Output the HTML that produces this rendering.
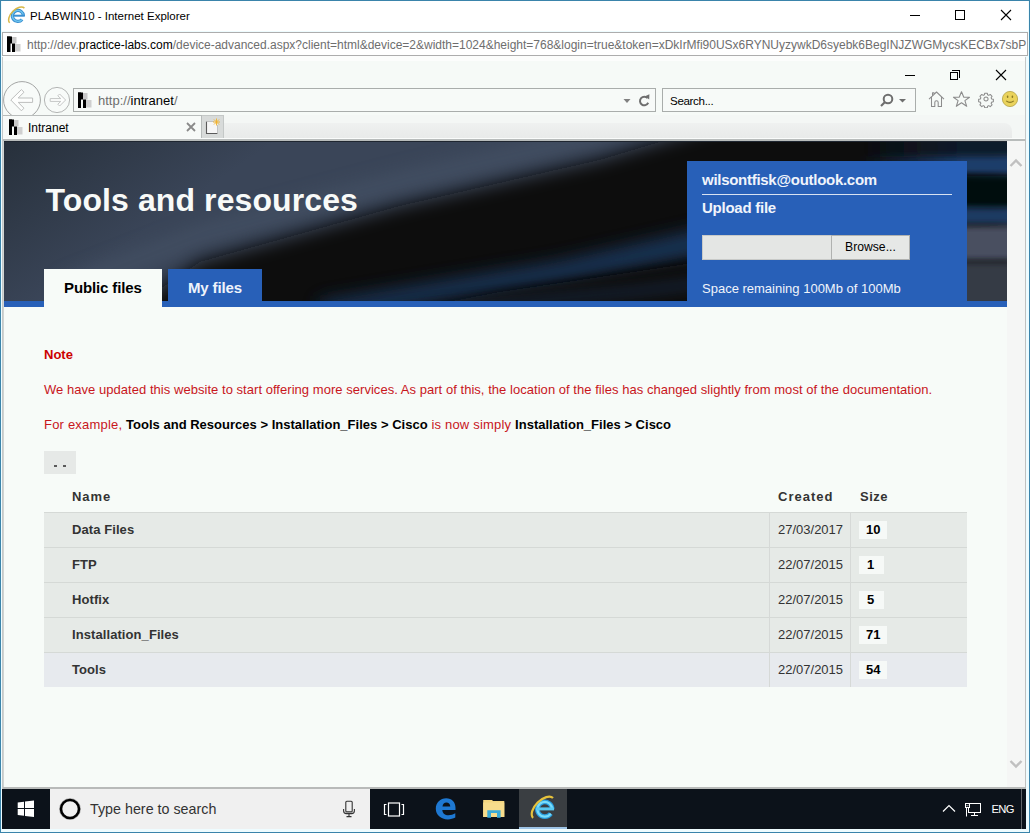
<!DOCTYPE html>
<html><head><meta charset="utf-8">
<style>
*{margin:0;padding:0;box-sizing:border-box}
html,body{width:1030px;height:833px;overflow:hidden;background:#fff;font-family:"Liberation Sans",sans-serif}
.a{position:absolute}
.t{position:absolute;white-space:pre;line-height:1}
</style></head>
<body>
<!-- outer window border -->
<div class="a" style="left:0;top:0;width:1030px;height:833px;border:1px solid #3a84ab;background:#fff"></div>
<div class="a" style="left:1px;top:1px;width:1028px;height:831px;background:#eefcff"></div>
<div class="a" style="left:2px;top:1px;width:1026px;height:30px;background:#fff"></div>

<!-- title bar -->
<svg class="a" style="left:6px;top:4px" width="22" height="22" viewBox="0 0 22 22">
  <path d="M17.4 11.9A5.5 5.5 0 1 0 16.1 15.5" stroke="#3a8fd0" stroke-width="3.3" fill="none"/>
  <path d="M17.4 11.9A5.5 5.5 0 1 0 16.1 15.5" stroke="#70c6f0" stroke-width="1.3" fill="none"/>
  <rect x="7" y="10.7" width="11.8" height="2" fill="#3a8fd0"/>
  <path d="M18.4 4.1A10 5.6 -45 0 0 3.7 18.8" stroke="#d8b848" stroke-width="1.5" fill="none"/>
</svg>
<div class="t" style="left:30px;top:10.5px;font-size:11.5px;color:#000">PLABWIN10 - Internet Explorer</div>
<div class="a" style="left:910px;top:15px;width:10px;height:1px;background:#000"></div>
<div class="a" style="left:955px;top:10px;width:10px;height:10px;border:1px solid #000"></div>
<svg class="a" style="left:1000px;top:9px" width="12" height="12" viewBox="0 0 12 12"><path d="M1 1L11 11M11 1L1 11" stroke="#000" stroke-width="1.1"/></svg>

<!-- rdp url box -->
<div class="a" style="left:2px;top:32px;width:1026px;height:24px;border:1px solid #adadad;background:#fff"></div>
<svg class="a" style="left:7px;top:36px" width="14" height="16" viewBox="0 0 14 16">
  <rect x="0" y="0.5" width="3.5" height="15.5" fill="#000"/><rect x="0" y="0.5" width="5" height="7" fill="#000"/>
  <rect x="5" y="1" width="4.5" height="6.5" fill="#c8c8c8"/>
  <rect x="5" y="7.5" width="3" height="8.5" fill="#000"/>
  <rect x="8" y="8" width="5.5" height="7.5" fill="#cfcfcf"/>
</svg>
<div class="t" style="left:27px;top:39px;font-size:12px;color:#6e6e6e;letter-spacing:-0.005px">http://dev.<span style="color:#000">practice-labs.com</span>/device-advanced.aspx?client=html&amp;device=2&amp;width=1024&amp;height=768&amp;login=true&amp;token=xDkIrMfi90USx6RYNUyzywkD6syebk6BegINJZWGMycsKECBx7sbP</div>

<!-- IE window -->
<div class="a" id="ie" style="left:2px;top:57px;width:1024px;height:772px;background:#f6faf7;border-left:1px solid #c4c8c8;border-right:1px solid #c4c8c8"></div>


<div class="a" style="left:3px;top:56px;width:1022px;height:5px;background:#fcfdfc"></div>
<!-- IE caption buttons -->
<div class="a" style="left:905px;top:75px;width:10px;height:1px;background:#000"></div>
<div class="a" style="left:950px;top:72px;width:8px;height:8px;border:1px solid #000"></div>
<div class="a" style="left:952px;top:70px;width:8px;height:8px;border-top:1px solid #000;border-right:1px solid #000"></div>
<svg class="a" style="left:995px;top:69px" width="12" height="12" viewBox="0 0 12 12"><path d="M1 1L11 11M11 1L1 11" stroke="#000" stroke-width="1.1"/></svg>

<!-- back / forward -->
<svg class="a" style="left:0px;top:78px" width="75" height="37" viewBox="0 78 75 37">
  <circle cx="22" cy="100" r="18.4" fill="#f8fbf9" stroke="#a4a6a5" stroke-width="1"/>
  <path d="M10.8 100L21.4 89.6L24 92.2L18.2 98H32.6V102.4H18.2L24 108.2L21.4 110.8z" fill="#fdfefd" stroke="#bdbfbe" stroke-width="1" stroke-linejoin="round"/>
  <circle cx="57" cy="100" r="12.6" fill="#f8fbf9" stroke="#b4b6b5" stroke-width="1"/>
  <path d="M65.6 100L59.6 94L57.8 95.8L60.8 98.6H50.2V101.4H60.8L57.8 104.2L59.6 106z" fill="#fdfefd" stroke="#c4c6c5" stroke-width="1" stroke-linejoin="round"/>
</svg>

<!-- address box -->
<div class="a" style="left:73px;top:88px;width:583px;height:24px;border:1px solid #a9adab;background:#f7faf8"></div>
<svg class="a" style="left:78px;top:92px" width="14" height="16" viewBox="0 0 14 16">
  <rect x="0" y="0.5" width="3" height="15.5" fill="#000"/><rect x="0" y="0.5" width="5" height="7" fill="#000"/>
  <rect x="5" y="1" width="4.5" height="6.5" fill="#c8c8c8"/>
  <rect x="5" y="7.5" width="3" height="8.5" fill="#000"/>
  <rect x="8" y="8" width="5.5" height="7.5" fill="#cfcfcf"/>
</svg>
<div class="t" style="left:98px;top:94px;font-size:13px;color:#6e6e6e">http://<span style="color:#000">intranet</span>/</div>
<svg class="a" style="left:622px;top:97px" width="10" height="8" viewBox="0 0 10 8"><path d="M1.5 2H8.5L5 6z" fill="#808080"/></svg>
<svg class="a" style="left:638px;top:93px" width="13" height="14" viewBox="0 0 13 14">
  <path d="M9.6 5.2A4.3 4.3 0 1 0 10.2 9.8" stroke="#6e6e6e" stroke-width="2" fill="none"/>
  <path d="M7 3.2L11.4 1.2L11.2 6.4z" fill="#6e6e6e"/>
</svg>

<!-- search box -->
<div class="a" style="left:662px;top:88px;width:254px;height:24px;border:1px solid #a9adab;background:#f7faf8"></div>
<div class="t" style="left:670px;top:94.8px;font-size:11.6px;color:#000;letter-spacing:-0.35px">Search...</div>
<svg class="a" style="left:878px;top:92px" width="30" height="16" viewBox="0 0 30 16">
  <circle cx="10" cy="7" r="4.3" stroke="#6e6e6e" stroke-width="2" fill="none"/>
  <path d="M7 10L3 14" stroke="#6e6e6e" stroke-width="2.2"/>
  <path d="M21 7H28L24.5 10.5z" fill="#6e6e6e"/>
</svg>

<!-- toolbar icons -->
<svg class="a" style="left:928px;top:90px" width="92" height="18" viewBox="0 0 92 18">
  <path d="M1 9.2L8.5 2L16 9.2M3.5 7V16.5H6.8V12.5A1.7 1.7 0 0 1 10.2 12.5V16.5H13.5V7M4.5 6V2.8H6V4.5" stroke="#8c8c8c" stroke-width="1.05" fill="none" stroke-linejoin="round"/>
  <path d="M33.5 1.8L35.8 7.2H41.5L36.9 10.6L38.7 16.3L33.5 12.8L28.3 16.3L30.1 10.6L25.5 7.2H31.2z" stroke="#8c8c8c" stroke-width="1.1" fill="none" stroke-linejoin="round"/>
  <g transform="translate(58,9) scale(0.8)" stroke="#8c8c8c" stroke-width="1.3" fill="none">
    <path d="M-1.6 -7.3h3.2l.4 2.1 1.5.7 1.8-1.2 2.3 2.3-1.2 1.8.7 1.5 2.1.4v3.2l-2.1.4-.7 1.5 1.2 1.8-2.3 2.3-1.8-1.2-1.5.7-.4 2.1h-3.2l-.4-2.1-1.5-.7-1.8 1.2-2.3-2.3 1.2-1.8-.7-1.5-2.1-.4v-3.2l2.1-.4.7-1.5-1.2-1.8 2.3-2.3 1.8 1.2 1.5-.7z" stroke-linejoin="round"/>
    <circle cx="0" cy="0" r="2.6"/>
  </g>
  <circle cx="82" cy="9" r="7.6" fill="#ead35c" stroke="#b4a244" stroke-width="0.8"/>
  <ellipse cx="79.6" cy="6.8" rx="0.8" ry="1.3" fill="#8a7a24"/><ellipse cx="84.4" cy="6.8" rx="0.8" ry="1.3" fill="#8a7a24"/>
  <path d="M78.2 10.8Q82 14 85.8 10.8" stroke="#8a7a24" stroke-width="1.1" fill="none"/>
</svg>

<!-- tab row -->
<div class="a" style="left:3px;top:115px;width:1022px;height:24px;background:#f4f7f5"></div>
<div class="a" style="left:215px;top:123px;width:797px;height:16px;border-radius:8px 8px 0 0;background:linear-gradient(#eff1f0,#e8eae9)"></div>
<div class="a" style="left:3px;top:115px;width:199px;height:24px;border-top:1px solid #b8bcbb;border-right:1px solid #b8bcbb;background:#f7faf8"></div>
<svg class="a" style="left:9px;top:119px" width="14" height="16" viewBox="0 0 14 16">
  <rect x="0" y="0.5" width="3" height="15.5" fill="#000"/><rect x="0" y="0.5" width="5" height="7" fill="#000"/>
  <rect x="5" y="1" width="4.5" height="6.5" fill="#c8c8c8"/>
  <rect x="5" y="7.5" width="3" height="8.5" fill="#000"/>
  <rect x="8" y="8" width="5.5" height="7.5" fill="#cfcfcf"/>
</svg>
<div class="t" style="left:28px;top:122px;font-size:12px;color:#000">Intranet</div>
<svg class="a" style="left:186px;top:122px" width="10" height="10" viewBox="0 0 10 10"><path d="M1 1L9 9M9 1L1 9" stroke="#8a8a8a" stroke-width="1.8"/></svg>
<div class="a" style="left:202px;top:115px;width:22px;height:23px;background:#d8dbda;border-right:1px solid #c4c8c7;border-top:1px solid #c4c8c7"></div>
<svg class="a" style="left:202px;top:116px" width="22" height="22" viewBox="0 0 22 22">
  <rect x="4" y="5.5" width="11.5" height="12.5" fill="#f6f6f6"/>
  <path d="M4.5 5.5V17.5H15.5" stroke="#5a5a5a" stroke-width="1.1" fill="none"/>
  <path d="M4.5 5.5H12M15.5 9V17.5" stroke="#b8b8b8" stroke-width="0.8" fill="none"/>
  <g stroke="#f0b028" stroke-width="0.9"><path d="M14.5 2.5V9.5M11 6H18M12 3.5L17 8.5M17 3.5L12 8.5"/></g>
</svg>
<div class="a" style="left:3px;top:138px;width:1022px;height:1px;background:#fafcfb"></div>
<div class="a" style="left:3px;top:139px;width:1022px;height:2px;background:#b8bcbb"></div>


<!-- content area -->
<div class="a" style="left:3px;top:141px;width:1023px;height:647px;background:#f7fbf8"></div>
<div class="a" style="left:3px;top:141px;width:1px;height:647px;background:#d0d4d3"></div>
<!-- header image -->
<svg class="a" id="hdr" style="left:4px;top:141px" width="1003" height="166" viewBox="4 141 1003 166">
  <defs>
    <filter id="b1" x="-20%" y="-50%" width="140%" height="200%"><feGaussianBlur stdDeviation="9"/></filter>
    <filter id="b2" x="-20%" y="-50%" width="140%" height="200%"><feGaussianBlur stdDeviation="6"/></filter>
    <filter id="b4" x="-20%" y="-50%" width="140%" height="200%"><feGaussianBlur stdDeviation="3"/></filter>
    <filter id="b3" x="-50%" y="-50%" width="200%" height="200%"><feGaussianBlur stdDeviation="30"/></filter>
    <linearGradient id="tl" x1="0" y1="0" x2="1" y2="0.6">
      <stop offset="0" stop-color="#27303b"/><stop offset="0.5" stop-color="#27303b" stop-opacity="0"/>
    </linearGradient>
  </defs>
  <rect x="4" y="141" width="1003" height="166" fill="#3a4558"/>
  <rect x="4" y="141" width="400" height="166" fill="url(#tl)"/>
  
  <path d="M60 300L200 245L400 192L600 146L700 120L700 100L600 126L400 172L200 225L60 280z" fill="#4a566a" filter="url(#b1)" opacity="0.55"/>
  <!-- dark band -->
  <path d="M100 330L200 262L400 206L600 160L680 136L760 110L1010 90L1010 330z" fill="#111111" filter="url(#b1)"/>
  <!-- blue streaks -->
  <path d="M320 302L560 262L700 230L1010 176L1010 200L700 254L560 282L320 320z" fill="#1b3a62" filter="url(#b1)" opacity="0.9"/>
  <path d="M300 330L500 292L700 262L1010 224L1010 330z" fill="#0e0e10" filter="url(#b2)"/>
  <path d="M300 314L640 284L1010 240L1010 252L640 298L300 330z" fill="#1e2e48" filter="url(#b2)" opacity="0.45"/>
  <!-- right strip -->
  <linearGradient id="rs1" x1="0" y1="0" x2="1" y2="0"><stop offset="0" stop-color="#1a3c6a" stop-opacity="0"/><stop offset="0.6" stop-color="#1a3c6a"/></linearGradient>
  <linearGradient id="rs0" x1="0" y1="0" x2="1" y2="0"><stop offset="0" stop-color="#0f1a2a" stop-opacity="0"/><stop offset="0.6" stop-color="#0f1a2a"/></linearGradient>
  <rect x="860" y="130" width="170" height="27" fill="url(#rs0)" filter="url(#b4)"/>
  <rect x="860" y="156" width="170" height="18" fill="url(#rs1)" filter="url(#b4)"/>
  <rect x="900" y="176" width="130" height="32" fill="#060709" filter="url(#b4)"/>
  <rect x="900" y="208" width="130" height="16" fill="#1e3a62" filter="url(#b4)"/>
  <rect x="900" y="226" width="130" height="34" fill="#4a5060" filter="url(#b4)"/>
  <rect x="900" y="262" width="130" height="50" fill="#363b45" filter="url(#b4)"/>
  <rect x="4" y="141" width="1003" height="1" fill="#1f2630"/>
</svg>
<div class="a" style="left:4px;top:301px;width:1003px;height:6px;background:#2860b8"></div>

<!-- heading -->
<div class="t" style="left:45.5px;top:183.5px;font-size:32px;font-weight:bold;color:#f8faf8;letter-spacing:0.1px">Tools and resources</div>

<!-- tabs -->
<div class="a" style="left:44px;top:269px;width:118px;height:38px;background:#f7fbf8"></div>
<div class="t" style="left:64px;top:279.5px;font-size:15px;font-weight:bold;color:#000;letter-spacing:-0.12px">Public files</div>
<div class="a" style="left:168px;top:269px;width:94px;height:32px;background:#2860b8"></div>
<div class="t" style="left:188px;top:279.5px;font-size:15px;font-weight:bold;color:#eef3fb;letter-spacing:-0.15px">My files</div>

<!-- upload panel -->
<div class="a" style="left:687px;top:161px;width:280px;height:146px;background:#2860b8"></div>
<div class="t" style="left:702px;top:172.2px;font-size:15px;font-weight:bold;color:#f0f4fb;letter-spacing:-0.28px">wilsontfisk@outlook.com</div>
<div class="a" style="left:702px;top:194px;width:250px;height:1px;background:#d8e2f2"></div>
<div class="t" style="left:702px;top:200.3px;font-size:15px;font-weight:bold;color:#f0f4fb;letter-spacing:-0.25px">Upload file</div>
<div class="a" style="left:702px;top:235px;width:130px;height:25px;background:#e4e6e4;border:1px solid #c8cac8"></div>
<div class="a" style="left:831px;top:235px;width:79px;height:25px;background:#e6e8e6;border:1px solid #b0b2b0"></div>
<div class="t" style="left:845px;top:241px;font-size:12.2px;color:#000">Browse...</div>
<div class="t" style="left:702px;top:282px;font-size:13px;color:#f0f4fb">Space remaining 100Mb of 100Mb</div>

<!-- note -->
<div class="t" style="left:44px;top:348px;font-size:13px;font-weight:bold;color:#cc0000">Note</div>
<div class="t" style="left:44px;top:383px;font-size:13px;color:#c8161c;letter-spacing:0.04px">We have updated this website to start offering more services. As part of this, the location of the files has changed slightly from most of the documentation.</div>
<div class="t" style="left:44px;top:418px;font-size:13px;color:#c8161c;letter-spacing:0.2px">For example, <b style="color:#000;letter-spacing:0.01px">Tools and Resources &gt; Installation_Files &gt; Cisco</b> is now simply <b style="color:#000;letter-spacing:0.01px">Installation_Files &gt; Cisco</b></div>

<!-- up button -->
<div class="a" style="left:44px;top:451px;width:32px;height:23px;background:#e6e9e7"></div>
<div class="a" style="left:54px;top:465px;width:3px;height:2px;background:#5a5a5a"></div>
<div class="a" style="left:63px;top:465px;width:3px;height:2px;background:#5a5a5a"></div>

<!-- table -->
<div class="t" style="left:72px;top:490px;font-size:13px;font-weight:bold;color:#333;letter-spacing:0.9px">Name</div>
<div class="t" style="left:778px;top:490px;font-size:13px;font-weight:bold;color:#333;letter-spacing:1px">Created</div>
<div class="t" style="left:860px;top:490px;font-size:13px;font-weight:bold;color:#333;letter-spacing:0.5px">Size</div>
<div class="a" style="left:44px;top:512px;width:923px;height:35px;background:#e6eae7;border-top:1px solid #d5d9d6"></div>
<div class="a" style="left:769px;top:512px;width:1px;height:35px;background:#d6d9d7"></div>
<div class="a" style="left:850px;top:512px;width:1px;height:35px;background:#d6d9d7"></div>
<div class="t" style="left:72px;top:523px;font-size:13px;font-weight:bold;color:#333;letter-spacing:0.08px">Data Files</div>
<div class="t" style="left:778px;top:523px;font-size:13px;color:#333">27/03/2017</div>
<div class="a" style="left:859px;top:521px;width:28px;height:18px;background:#f6f9f7"></div>
<div class="t" style="left:866px;top:523px;font-size:13px;font-weight:bold;color:#000">10</div>
<div class="a" style="left:44px;top:547px;width:923px;height:35px;background:#e6eae7;border-top:1px solid #d5d9d6"></div>
<div class="a" style="left:769px;top:547px;width:1px;height:35px;background:#d6d9d7"></div>
<div class="a" style="left:850px;top:547px;width:1px;height:35px;background:#d6d9d7"></div>
<div class="t" style="left:72px;top:558px;font-size:13px;font-weight:bold;color:#333;letter-spacing:0.08px">FTP</div>
<div class="t" style="left:778px;top:558px;font-size:13px;color:#333">22/07/2015</div>
<div class="a" style="left:859px;top:556px;width:25px;height:18px;background:#f6f9f7"></div>
<div class="t" style="left:867px;top:558px;font-size:13px;font-weight:bold;color:#000">1</div>
<div class="a" style="left:44px;top:582px;width:923px;height:35px;background:#e6eae7;border-top:1px solid #d5d9d6"></div>
<div class="a" style="left:769px;top:582px;width:1px;height:35px;background:#d6d9d7"></div>
<div class="a" style="left:850px;top:582px;width:1px;height:35px;background:#d6d9d7"></div>
<div class="t" style="left:72px;top:593px;font-size:13px;font-weight:bold;color:#333;letter-spacing:0.08px">Hotfix</div>
<div class="t" style="left:778px;top:593px;font-size:13px;color:#333">22/07/2015</div>
<div class="a" style="left:859px;top:591px;width:25px;height:18px;background:#f6f9f7"></div>
<div class="t" style="left:867px;top:593px;font-size:13px;font-weight:bold;color:#000">5</div>
<div class="a" style="left:44px;top:617px;width:923px;height:35px;background:#e6eae7;border-top:1px solid #d5d9d6"></div>
<div class="a" style="left:769px;top:617px;width:1px;height:35px;background:#d6d9d7"></div>
<div class="a" style="left:850px;top:617px;width:1px;height:35px;background:#d6d9d7"></div>
<div class="t" style="left:72px;top:628px;font-size:13px;font-weight:bold;color:#333;letter-spacing:0.08px">Installation_Files</div>
<div class="t" style="left:778px;top:628px;font-size:13px;color:#333">22/07/2015</div>
<div class="a" style="left:859px;top:626px;width:28px;height:18px;background:#f6f9f7"></div>
<div class="t" style="left:866px;top:628px;font-size:13px;font-weight:bold;color:#000">71</div>
<div class="a" style="left:44px;top:652px;width:923px;height:35px;background:#e7eaee;border-top:1px solid #d5d9d6"></div>
<div class="a" style="left:769px;top:652px;width:1px;height:35px;background:#d6d9d7"></div>
<div class="a" style="left:850px;top:652px;width:1px;height:35px;background:#d6d9d7"></div>
<div class="t" style="left:72px;top:663px;font-size:13px;font-weight:bold;color:#333;letter-spacing:0.08px">Tools</div>
<div class="t" style="left:778px;top:663px;font-size:13px;color:#333">22/07/2015</div>
<div class="a" style="left:859px;top:661px;width:28px;height:18px;background:#f6f9f7"></div>
<div class="t" style="left:866px;top:663px;font-size:13px;font-weight:bold;color:#000">54</div>


<!-- scrollbar -->
<div class="a" style="left:1007px;top:141px;width:18px;height:647px;background:#f5f6f5"></div>
<div class="a" style="left:1025px;top:139px;width:1px;height:650px;background:#bfc1c0"></div>
<svg class="a" style="left:1009px;top:157px" width="14" height="11" viewBox="0 0 14 11"><path d="M1.5 9L7 3.5L12.5 9" stroke="#c0c0c0" stroke-width="2.4" fill="none"/></svg>
<svg class="a" style="left:1009px;top:759px" width="14" height="11" viewBox="0 0 14 11"><path d="M1.5 2L7 7.5L12.5 2" stroke="#c0c0c0" stroke-width="2.4" fill="none"/></svg>
<div class="a" style="left:3px;top:787px;width:1023px;height:2px;background:#b8bab9"></div>

<!-- taskbar -->
<div class="a" style="left:2px;top:789px;width:1024px;height:40px;background:#0c121a"></div>
<div class="a" style="left:50px;top:789px;width:320px;height:40px;background:#f0f0f0"></div>


<!-- windows logo -->
<svg class="a" style="left:17px;top:800px" width="18" height="18" viewBox="0 0 18 18">
  <path d="M0.7 2.6L7 1.8V8H0.7zM8 1.6L17 0.6V8H8zM0.7 9H7V15.8L0.7 15zM8 9H17V17L8 15.9z" fill="#fff"/>
</svg>
<!-- search circle -->
<svg class="a" style="left:58px;top:797px" width="24" height="24" viewBox="0 0 24 24">
  <circle cx="12" cy="12" r="9" stroke="#000" stroke-width="2.6" fill="none"/>
  <circle cx="12" cy="12" r="10.5" stroke="rgba(0,0,0,0.25)" stroke-width="1" fill="none"/>
</svg>
<div class="t" style="left:90px;top:802px;font-size:14.3px;color:#333">Type here to search</div>
<svg class="a" style="left:342px;top:800px" width="14" height="18" viewBox="0 0 14 18">
  <rect x="3.8" y="1.3" width="6.4" height="10.6" rx="1" stroke="#333" stroke-width="1.1" fill="none"/>
  <path d="M1.6 9V10.8Q1.6 13.6 4.4 13.6H9.6Q12.4 13.6 12.4 10.8V9M7 13.6V16.6M4.5 16.6H9.5" stroke="#333" stroke-width="1.1" fill="none"/>
</svg>
<!-- task view -->
<svg class="a" style="left:383px;top:802px" width="22" height="15" viewBox="0 0 22 15">
  <rect x="5.5" y="1" width="11" height="13" stroke="#fff" stroke-width="1.2" fill="none"/>
  <path d="M3.5 2.5H1.5V12.5H3.5M18.5 2.5H20.5V12.5H18.5" stroke="#fff" stroke-width="1.2" fill="none"/>
</svg>
<!-- edge -->
<svg class="a" style="left:435px;top:798px" width="21" height="22" viewBox="0 0 21 22">
  <path fill-rule="evenodd" d="M20.5 12H7.3C7.6 15.4 10 17.3 13.4 17.3C15.9 17.3 18.3 16.6 20.3 15.3V19.6C18.3 20.8 15.6 21.4 12.9 21.4C5.8 21.4 0.8 16.9 0.8 10.8C0.8 4.6 5.3 0.3 11.2 0.3C16.9 0.3 20.5 4.2 20.5 9.8ZM7.5 8.6H15.3C15.1 6.2 13.6 4.6 11.4 4.6C9.3 4.6 7.8 6.2 7.5 8.6Z" fill="#1e78d2"/>
</svg>
<!-- explorer -->
<svg class="a" style="left:482px;top:799px" width="24" height="20" viewBox="0 0 24 20">
  <path d="M1.2 1H10L11 2H22.3V17.9H1.2z" fill="#f4d680"/>
  <path d="M1.2 3.5H22.3V17.9H1.2z" fill="#f7dc8c"/>
  <path d="M5.3 11.2H18.6V18.8H15V14H9V18.8H5.3z" fill="#3aaad8"/>
</svg>
<!-- IE active -->
<div class="a" style="left:519px;top:789px;width:48px;height:40px;background:#3a3e42"></div>
<div class="a" style="left:519px;top:827px;width:48px;height:2px;background:#9ec4e6"></div>
<svg class="a" style="left:525px;top:792px" width="36" height="32" viewBox="525 792 36 32">
  <path d="M552.2 809.3A7.4 7.4 0 1 0 550.8 813.6" stroke="#2a9ede" stroke-width="4.6" fill="none"/>
  <path d="M552.2 809.3A7.4 7.4 0 1 0 550.8 813.6" stroke="#78dcfa" stroke-width="2.2" fill="none"/>
  <rect x="537" y="807.4" width="17" height="3" fill="#58c8f0"/>
  <path d="M553 798A14 7.6 -45 0 0 533.1 817.9" stroke="#e6c23c" stroke-width="2.2" fill="none"/>
</svg>
<!-- tray -->
<svg class="a" style="left:942px;top:804px" width="14" height="9" viewBox="0 0 14 9"><path d="M1 7.5L7 1.5L13 7.5" stroke="#fff" stroke-width="1.2" fill="none"/></svg>
<svg class="a" style="left:964px;top:802px" width="18" height="15" viewBox="0 0 18 15">
  <rect x="4.5" y="1.5" width="12" height="9" stroke="#fff" stroke-width="1" fill="none"/>
  <path d="M10.5 11V13.5M7 13.5H14" stroke="#fff" stroke-width="1" fill="none"/>
  <rect x="1.5" y="1.5" width="4" height="4" stroke="#fff" stroke-width="1" fill="#0c121a"/>
  <path d="M2.5 6V14.5" stroke="#fff" stroke-width="1"/>
  <path d="M2.5 3.2L3.4 4.2L4.5 2.8" stroke="#fff" stroke-width="0.7" fill="none"/>
</svg>
<div class="t" style="left:991.5px;top:804px;font-size:11.2px;color:#fff;letter-spacing:-0.6px">ENG</div>
<div class="a" style="left:1021px;top:789px;width:1px;height:40px;background:#606468"></div>

</body></html>
